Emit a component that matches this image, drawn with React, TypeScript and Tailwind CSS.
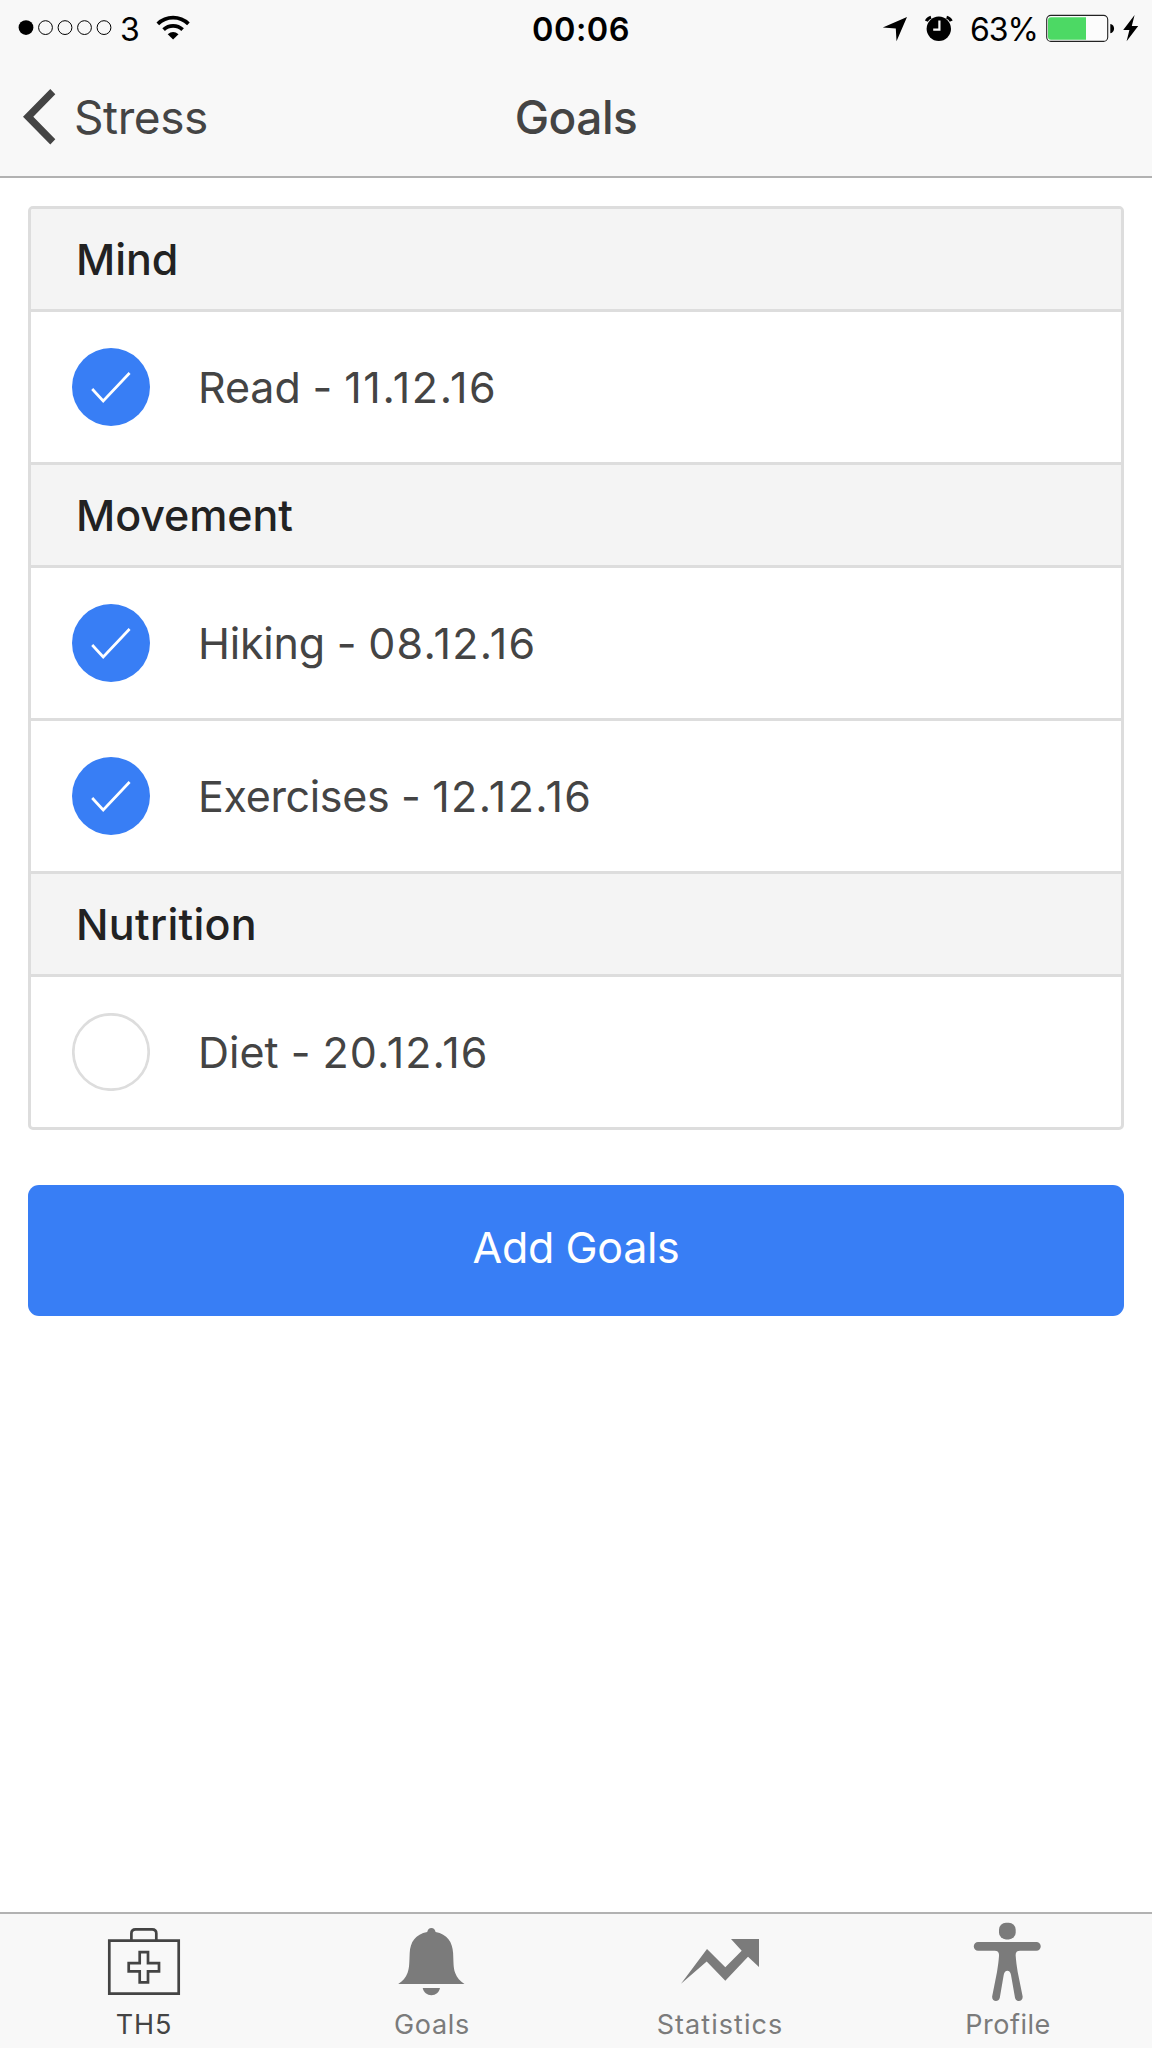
import type { ReactNode } from 'react';

type Goal = { name: string; date: string; done: boolean; nameTracking: string; dateTracking: string };
type Section = { title: string; tracking: string; goals: Goal[] };

const sections: Section[] = [
  {
    title: 'Mind',
    tracking: 'tracking-[-0.1px]',
    goals: [{ name: 'Read - ', date: '11.12.16', done: true, nameTracking: 'tracking-[-0.1px]', dateTracking: 'tracking-[1.6px]' }],
  },
  {
    title: 'Movement',
    tracking: 'tracking-[-0.1px]',
    goals: [
      { name: 'Hiking - ', date: '08.12.16', done: true, nameTracking: 'tracking-[-0.22px]', dateTracking: 'tracking-[1.3px]' },
      { name: 'Exercises - ', date: '12.12.16', done: true, nameTracking: 'tracking-[-0.34px]', dateTracking: 'tracking-[1.4px]' },
    ],
  },
  {
    title: 'Nutrition',
    tracking: 'tracking-[0.3px]',
    goals: [{ name: 'Diet - ', date: '20.12.16', done: false, nameTracking: 'tracking-[0px]', dateTracking: 'tracking-[1.05px]' }],
  },
];

function StatusBar() {
  return (
    <div className="flex h-14 text-[32.5px] leading-[59px] text-black">
      <div className="flex w-[532px] shrink-0">
        <svg width="120" height="56" viewBox="0 0 120 56">
          <circle cx="26" cy="27.6" r="7.4" />
          <g fill="none" stroke="#000" strokeWidth="1">
            <circle cx="45.5" cy="27.6" r="6.9" />
            <circle cx="65" cy="27.6" r="6.9" />
            <circle cx="84.5" cy="27.6" r="6.9" />
            <circle cx="104" cy="27.6" r="6.9" />
          </g>
        </svg>
        <span className="w-9 text-[32px]">3</span>
        <svg width="36" height="56" viewBox="156 0 36 56">
          <g fill="none" stroke="#000">
            <path d="M157.8 23.8a22 22 0 0 1 30.6 0" strokeWidth="3.8" />
            <path d="M163.6 29.6a14 14 0 0 1 19 0" strokeWidth="3.8" />
          </g>
          <path d="M167.7 34.2a8.8 8.8 0 0 1 10.8 0l-5.4 5.4z" />
        </svg>
      </div>
      <span className="font-semibold tracking-[0.5px]">00:06</span>
      <div className="ml-auto flex">
        <svg width="88" height="56" viewBox="882 0 88 56">
          <path d="M907 17 896.5 41.3 895.8 28.4 882.8 27.6z" />
          <circle cx="938.8" cy="28.8" r="12.2" />
          <g fill="none" stroke="#000" strokeWidth="3.2">
            <path d="M926.4 21.2q1.4-3.2 4.6-3.9" />
            <path d="M951.2 21.2q-1.4-3.2-4.6-3.9" />
          </g>
          <path d="M939.4 20.5v9.2h-6.2" fill="none" stroke="#f8f8f8" strokeWidth="2.2" />
        </svg>
        <span className="w-[75px] text-[32px] tracking-[-1px]">63%</span>
        <svg width="107" height="56" viewBox="1045 0 107 56">
          <rect x="1046.7" y="15.4" width="61" height="26" rx="4.2" fill="#fcfcfc" stroke="#222" strokeWidth="1.1" />
          <path d="M1086 17.3v22.4h-35a3 3 0 0 1-3-3V20.3a3 3 0 0 1 3-3z" fill="#4cd964" />
          <path d="M1110.3 24c5 .5 5 8.7 0 9.2z" />
          <path d="M1134.6 15 1123.2 30h6.2l-2.8 11.2L1138.2 26h-6.4z" />
        </svg>
      </div>
    </div>
  );
}

function NavBar() {
  return (
    <div className="grid h-[120px] grid-cols-3 text-[46px] leading-[123px] text-[#444]">
      <div className="flex tracking-[-0.44px]">
        <svg width="74" height="120" viewBox="0 56 74 120" fill="#444">
          <path d="M50.3 89 55.3 94.3 33.3 116.8 55.3 139.2 50.3 144.5 23 116.8z" />
        </svg>
        Stress
      </div>
      <h1 className="text-center font-medium tracking-[-0.5px]">Goals</h1>
    </div>
  );
}

function CheckCircle({ done }: { done: boolean }) {
  return (
    <svg width="78" height="78" viewBox="0 0 78 78" fill="none" className="shrink-0">
      {done ? (
        <>
          <circle cx="39" cy="39" r="39" fill="#387ef5" />
          <path d="M20.2 41 31.2 53 57.6 25" stroke="#fff" strokeWidth="2.7" />
        </>
      ) : (
        <circle cx="39" cy="39" r="37.7" stroke="#ddd" strokeWidth="2.7" fill="#fff" />
      )}
    </svg>
  );
}

function GoalList() {
  return (
    <div className="overflow-hidden rounded-[5px] border-[3px] border-[#ddd] text-[43px]">
      {sections.map((s, i) => (
        <section key={s.title} className={i > 0 ? 'border-t-[3px] border-[#ddd]' : ''}>
          <h2 className={`h-[100px] bg-[#f4f4f4] pl-[45px] leading-[101px] font-medium text-[#222] ${s.tracking}`}>{s.title}</h2>
          {s.goals.map((g) => (
            <div key={g.name} className="flex h-[153px] items-center gap-12 border-t-[3px] border-[#ddd] pl-[41px] text-[#444]">
              <CheckCircle done={g.done} />
              <span className={`leading-[150px] whitespace-pre ${g.nameTracking}`}>
                {g.name}
                <span className={g.dateTracking}>{g.date}</span>
              </span>
            </div>
          ))}
        </section>
      ))}
    </div>
  );
}

function Tab({ label, tracking, active, children }: { label: string; tracking: string; active?: boolean; children: ReactNode }) {
  return (
    <div className={`flex flex-col items-center ${active ? 'text-[#444]' : 'text-[#7b7b7b]'}`}>
      <svg width="96" height="92" viewBox="0 0 96 92" fill="currentColor">
        {children}
      </svg>
      <span className={`text-[27px] leading-[38px] ${tracking}`}>{label}</span>
    </div>
  );
}

function TabBar() {
  return (
    <nav className="grid h-[136px] grid-cols-4 border-t-2 border-[#b2b2b2] bg-[#f8f8f8]">
      <Tab label="TH5" tracking="tracking-[0.9px]" active>
        <g fill="none" stroke="currentColor" strokeWidth="2.7">
          <path d="M13.3 26.6h69.4v53H13.3z" />
          <path d="M35.4 26.6v-7q0-4.2 4.2-4.2h16.5q4.2 0 4.2 4.2v7" />
          <path d="M43.7 38.1H52v11h11v8.3H52v11h-8.3v-11h-11v-8.3h11z" />
        </g>
      </Tab>
      <Tab label="Goals" tracking="tracking-[0.68px]">
        <path d="M47.4 14c2.1 0 3.8 1.6 4.2 4.1 11.7 2.1 16.9 10.1 17.5 20.9.5 9.5.2 14.6 2 19.8 1.8 4.8 5 8.5 9.4 11.2H14.2c4.4-2.7 7.6-6.4 9.400-11.2 1.9-5.2 1.700-10.3 2.100-19.8.5-10.8 5.8-18.8 17.5-20.900.4-2.500 2.100-4.100 4.200-4.100z" />
        <path d="M38.7 74H56c-.9 4.5-4.3 7.2-8.6 7.2S39.6 78.500 38.7 74z" />
      </Tab>
      <Tab label="Statistics" tracking="tracking-[1.05px]">
        <path d="M9 69.7 35 35 53.3 53.3 69.7 36.7 59 25H87V53L76 42.7 53.3 66.7 34.7 47.5z" />
      </Tab>
      <Tab label="Profile" tracking="tracking-[0.51px]">
        <rect x="39" y="8.7" width="16.7" height="16.7" rx="7" />
        <path d="M18.1 28h58.3a4.35 4.35 0 0 1 0 8.7H60c-3.2 0-4.6 1.6-4.3 5.3.3 4.5 1 10 2 16L62.6 82.3c.8 5.3-6.3 6.6-7.6 1.5L51 61c-.7-5.7-6.5-5.7-7.3 0L39.8 83.8c-1.3 5.1-8.4 3.8-7.6-1.5L37 58c1-6 1.7-11.5 2-16 .3-3.7-1.1-5.3-4.3-5.3H18.1a4.35 4.35 0 0 1 0-8.7z" />
      </Tab>
    </nav>
  );
}

export default function App() {
  return (
    <div className="flex h-[2048px] w-[1152px] flex-col bg-white font-['Inter',sans-serif]">
      <header className="h-[178px] border-b-2 border-[#b2b2b2] bg-[#f8f8f8]">
        <StatusBar />
        <NavBar />
      </header>
      <main className="flex-1 px-7 pt-7">
        <GoalList />
        <button className="mt-[55px] block h-[131px] w-full rounded-[11px] bg-[#387ef5] pb-[7px] text-[43px] tracking-[-0.35px] text-white">Add Goals</button>
      </main>
      <TabBar />
    </div>
  );
}
